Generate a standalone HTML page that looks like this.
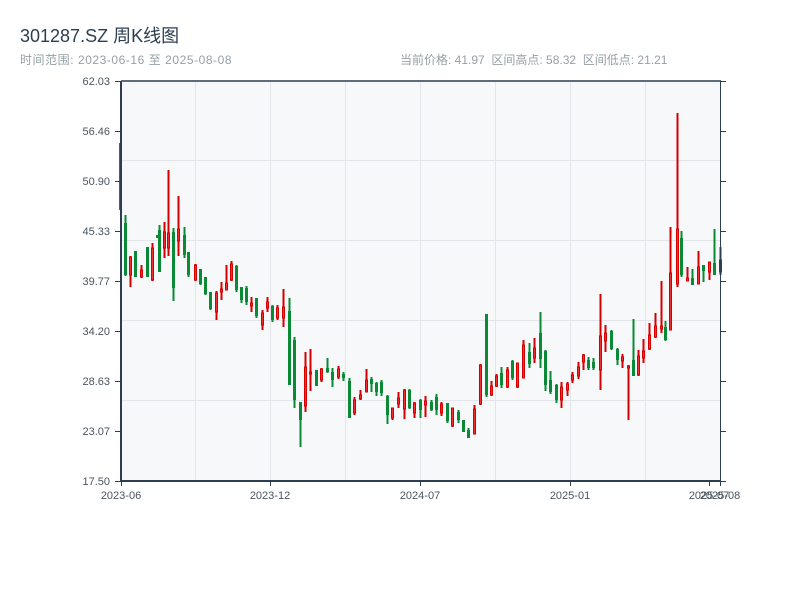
<!DOCTYPE html>
<html><head><meta charset="utf-8"><style>
body{margin:0;width:800px;height:600px;background:#fff;font-family:"Liberation Sans","Noto Sans CJK SC",sans-serif;overflow:hidden;position:relative}
.t{position:absolute;left:20px;top:22px;font-size:18px;color:#2c3e50}
.s{position:absolute;left:20px;top:51px;font-size:12px;color:#95a0a6;letter-spacing:0.55px}
.r{position:absolute;left:400px;top:51px;font-size:12px;color:#95a0a6}
svg{position:absolute;left:0;top:0}
</style></head><body>
<div class="t">301287.SZ 周K线图</div>
<div class="s">时间范围: 2023-06-16 至 2025-08-08</div>
<div class="r">当前价格: 41.97&nbsp; 区间高点: 58.32&nbsp; 区间低点: 21.21</div>
<svg id="c" width="800" height="600" xmlns="http://www.w3.org/2000/svg" font-family="Liberation Sans, sans-serif" font-size="11">
<rect x="121" y="81" width="599" height="400" fill="#f7f8fa"/>
<g stroke="#e3e5ea" stroke-width="1">
<line x1="195.5" y1="81" x2="195.5" y2="481"/><line x1="270.5" y1="81" x2="270.5" y2="481"/><line x1="345.5" y1="81" x2="345.5" y2="481"/><line x1="420.5" y1="81" x2="420.5" y2="481"/><line x1="495.5" y1="81" x2="495.5" y2="481"/><line x1="570.5" y1="81" x2="570.5" y2="481"/><line x1="645.5" y1="81" x2="645.5" y2="481"/>
<line x1="121" y1="160.5" x2="720" y2="160.5"/><line x1="121" y1="240.5" x2="720" y2="240.5"/><line x1="121" y1="320.5" x2="720" y2="320.5"/><line x1="121" y1="400.5" x2="720" y2="400.5"/>
</g>
<g id="k"></g>
<g stroke="#2c3e50">
<line x1="121" y1="81" x2="721" y2="81" stroke-width="1.5"/>
<line x1="121" y1="481" x2="721" y2="481" stroke-width="2"/>
<line x1="121" y1="81" x2="121" y2="481" stroke-width="2"/>
<line x1="720.5" y1="81" x2="720.5" y2="481" stroke-width="1"/>
</g>
<g id="ax" stroke="#2c3e50" stroke-width="1"></g>
<g fill="#4a5560" text-anchor="end" id="yl"></g>
<g fill="#4a5560" text-anchor="middle">
<text x="121" y="499">2023-06</text><text x="270" y="499">2023-12</text><text x="420" y="499">2024-07</text><text x="570" y="499">2025-01</text><text x="709" y="499">2025-07</text><text x="720" y="499">2025-08</text>
</g>
</svg>
<script>
var d=[[120,143,210,143,210,'g'],[125,215,276,223,275,'g'],[130,256,287,257,275,'r'],[135,251,277,251,277,'g'],[141,265,278,270,277,'r'],[147,247,277,247,277,'g'],[152,243,281,248,280,'r'],[157,235,238,235,238,'g'],[159,225,272,230,272,'g'],[164,222,258,232,248,'r'],[168,170,256,233,248,'r'],[173,228,301,232,288,'g'],[178,196,256,229,241,'r'],[184,227,258,235,255,'g'],[188,252,277,252,275,'g'],[195,264,281,265,280,'r'],[200,269,285,269,284,'g'],[205,277,295,277,294,'g'],[210,292,310,292,309,'g'],[216,291,320,293,312,'r'],[221,282,300,289,292,'r'],[226,265,289,283,290,'r'],[231,261,281,264,280,'r'],[236,265,292,266,290,'g'],[241,287,303,287,300,'g'],[246,286,305,288,302,'g'],[251,297,312,303,306,'r'],[256,298,318,298,316,'g'],[262,310,330,313,325,'r'],[267,297,312,302,308,'r'],[272,305,322,306,320,'g'],[277,305,320,308,318,'r'],[283,289,327,307,318,'r'],[289,298,385,311,385,'g'],[294,337,408,340,400,'g'],[300,402,447,402,420,'g'],[305,352,412,367,406,'r'],[310,349,391,372,373,'r'],[316,370,386,370,386,'g'],[321,368,382,369,380,'r'],[327,358,373,368,372,'g'],[332,368,387,372,380,'g'],[338,366,379,369,377,'r'],[343,372,381,374,378,'g'],[349,378,418,381,418,'g'],[354,397,415,400,413,'r'],[360,390,400,395,399,'r'],[366,369,392,380,392,'r'],[371,377,392,379,384,'g'],[376,382,396,383,392,'g'],[381,380,396,382,393,'g'],[387,395,424,396,415,'g'],[392,408,420,408,418,'r'],[398,392,408,398,404,'r'],[404,389,419,390,409,'r'],[409,389,409,390,408,'g'],[414,402,418,403,413,'r'],[420,399,418,400,410,'g'],[425,396,417,401,405,'r'],[431,400,411,402,410,'g'],[436,394,415,397,410,'g'],[441,402,416,404,413,'r'],[447,403,423,403,421,'g'],[452,408,427,408,426,'r'],[458,410,423,412,420,'g'],[463,420,432,420,432,'g'],[468,428,438,430,438,'g'],[474,405,434,409,434,'r'],[480,364,405,365,404,'r'],[486,314,397,314,395,'g'],[491,381,396,386,395,'r'],[496,374,387,376,386,'r'],[501,367,388,373,385,'g'],[507,367,388,370,387,'r'],[512,360,380,361,378,'g'],[517,363,388,363,387,'r'],[523,340,378,345,378,'r'],[529,343,368,352,364,'g'],[534,338,363,348,358,'r'],[540,312,368,333,359,'g'],[545,350,391,351,385,'g'],[550,371,394,380,392,'g'],[556,384,403,385,400,'g'],[561,382,408,387,400,'r'],[567,382,396,384,390,'r'],[572,372,383,375,380,'r'],[578,362,379,367,376,'r'],[583,354,370,355,362,'r'],[588,357,370,360,368,'g'],[593,358,370,362,368,'g'],[600,294,390,336,370,'r'],[605,325,352,333,341,'r'],[611,330,350,331,349,'g'],[617,348,365,349,360,'g'],[622,354,368,357,361,'r'],[628,365,420,366,368,'r'],[633,319,376,360,376,'g'],[638,350,376,356,375,'r'],[643,339,363,351,358,'r'],[649,323,350,335,349,'r'],[655,313,338,326,337,'r'],[661,281,333,326,329,'r'],[665,321,341,327,340,'g'],[670,227,330,273,330,'r'],[677,113,287,229,284,'r'],[681,231,277,238,275,'g'],[687,267,281,278,281,'r'],[692,269,285,278,285,'g'],[698,251,284,267,284,'r'],[703,265,282,265,271,'g'],[709,262,280,262,272,'r'],[714,229,275,263,275,'g'],[720,247,275,260,272,'r']];
var s='';
d.forEach(function(a){var x=a[0],g=a[5]=='g',col=g?'#0a8a35':'#d40000';
s+='<line x1="'+(x+0.5)+'" y1="'+a[1]+'" x2="'+(x+0.5)+'" y2="'+a[2]+'" stroke="'+col+'" stroke-width="2"/>';
var h=Math.max(a[4]-a[3],2);
if(g)s+='<rect x="'+(x-1)+'" y="'+a[3]+'" width="3" height="'+h+'" fill="'+col+'"/>';
else s+='<rect x="'+(x-0.5)+'" y="'+a[3]+'" width="2" height="'+h+'" fill="#f03030" stroke="'+col+'" stroke-width="1"/>';});
document.getElementById('k').innerHTML=s;
var L=['62.03','56.46','50.90','45.33','39.77','34.20','28.63','23.07','17.50'],t='',a='';
L.forEach(function(v,i){var y=81+i*50;t+='<text x="110" y="'+(y+4)+'">'+v+'</text>';a+='<line x1="115" y1="'+(y+.5)+'" x2="121" y2="'+(y+.5)+'"/><line x1="720" y1="'+(y+.5)+'" x2="726" y2="'+(y+.5)+'"/>';});
[121,270,420,570,709,720].forEach(function(x){a+='<line x1="'+(x+.5)+'" y1="481" x2="'+(x+.5)+'" y2="486"/>';});
document.getElementById('yl').innerHTML=t;document.getElementById('ax').innerHTML=a;
</script>
</body></html>
